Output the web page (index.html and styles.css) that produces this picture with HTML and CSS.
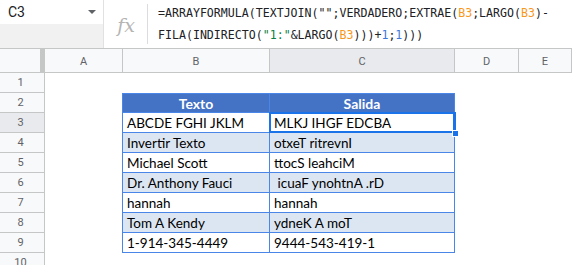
FILE: index.html
```html
<!DOCTYPE html>
<html>
<head>
<meta charset="utf-8">
<link rel="stylesheet" href="styles.css">
</head>
<body>
<div class="fbar">
  <div class="namebox">
    <div class="nb-top"><span class="nb-ref">C3</span><span class="nb-arrow"></span></div>
    <div class="nb-bottom"></div>
  </div>
  <div class="fx"><span>fx</span></div>
  <div class="formula">
    <div class="fline">=ARRAYFORMULA(TEXTJOIN("";VERDADERO;EXTRAE(<span class="ref">B3</span>;LARGO(<span class="ref">B3</span>)-</div>
    <div class="fline">FILA(INDIRECTO(<span class="str">"1:"</span>&amp;LARGO(<span class="ref">B3</span>)))+<span class="num">1</span>;<span class="num">1</span>)))</div>
  </div>
</div>
<div class="sheet">
  <div class="corner"></div>
  <div class="colh">A</div>
  <div class="colh">B</div>
  <div class="colh sel">C</div>
  <div class="colh">D</div>
  <div class="colh">E</div>

  <div class="rowh">1</div><div class="cell"></div><div class="cell"></div><div class="cell"></div><div class="cell"></div><div class="cell"></div>

  <div class="rowh">2</div><div class="cell"></div><div class="t th tl">Texto</div><div class="t th">Salida</div><div class="cell"></div><div class="cell"></div>

  <div class="rowh sel">3</div><div class="cell"></div><div class="t tl">ABCDE FGHI JKLM</div><div class="t active">MLKJ IHGF EDCBA<span class="handle"></span></div><div class="cell"></div><div class="cell"></div>

  <div class="rowh">4</div><div class="cell"></div><div class="t tl alt">Invertir Texto</div><div class="t alt">otxeT ritrevnI</div><div class="cell"></div><div class="cell"></div>

  <div class="rowh">5</div><div class="cell"></div><div class="t tl">Michael Scott</div><div class="t">ttocS leahciM</div><div class="cell"></div><div class="cell"></div>

  <div class="rowh">6</div><div class="cell"></div><div class="t tl alt">Dr. Anthony Fauci</div><div class="t alt">&nbsp;icuaF ynohtnA .rD</div><div class="cell"></div><div class="cell"></div>

  <div class="rowh">7</div><div class="cell"></div><div class="t tl">hannah</div><div class="t">hannah</div><div class="cell"></div><div class="cell"></div>

  <div class="rowh">8</div><div class="cell"></div><div class="t tl alt">Tom A Kendy</div><div class="t alt">ydneK A moT</div><div class="cell"></div><div class="cell"></div>

  <div class="rowh">9</div><div class="cell"></div><div class="t tl">1-914-345-4449</div><div class="t">9444-543-419-1</div><div class="cell"></div><div class="cell"></div>

  <div class="rowh">10</div><div class="cell"></div><div class="cell"></div><div class="cell"></div><div class="cell"></div><div class="cell"></div>
</div>
</body>
</html>
```
FILE: styles.css
```css
* { box-sizing: border-box; }
html, body { margin: 0; padding: 0; background: #fff; overflow: hidden; }
body { font-family: Roboto, "Liberation Sans", sans-serif; width: 572px; height: 265px; }

.fbar {
  display: flex;
  height: 49px;
  border-bottom: 1px solid #c4c7c5;
}
.namebox {
  width: 104px;
  display: flex;
  flex-direction: column;
  border-right: 1px solid #e1e1e1;
}
.nb-top {
  height: 24px;
  display: flex;
  align-items: center;
  justify-content: space-between;
  padding: 0 7px 0 8px;
  background: #fff;
}
.nb-ref { font-size: 14px; color: #202124; }
.nb-arrow {
  width: 0; height: 0;
  border-left: 4px solid transparent;
  border-right: 4px solid transparent;
  border-top: 4px solid #5f6368;
}
.nb-bottom { flex: 1; background: #f1f1f1; }

.fx {
  width: 44px;
  display: flex;
  align-items: center;
  justify-content: center;
  position: relative;
}
.fx::after {
  content: "";
  position: absolute;
  right: 0; top: 4px; bottom: 4px;
  width: 1px;
  background: #dadce0;
}
.fx span {
  font-family: "DejaVu Serif", "Liberation Serif", serif;
  font-style: italic;
  font-size: 19px;
  color: #b4b4b4;
  margin-top: 1px;
}
.formula {
  flex: 1;
  padding: 2px 0 0 10px;
  font-family: "DejaVu Sans Mono", "Liberation Mono", monospace;
  font-size: 11.6px;
  color: #202124;
  white-space: nowrap;
}
.fline { height: 22px; line-height: 22px; }
.ref { color: #f7981d; }
.num { color: #3c78d8; }
.str { color: #0b8043; }

.sheet {
  display: grid;
  width: 572px;
  grid-template-columns: 45px 78px 147px 185px 64px 1fr;
  grid-template-rows: 24px repeat(10, 20px);
}
.corner {
  background: #f8f9fa;
  border-right: 5px solid #c4c7c5;
  border-bottom: 1px solid #c4c7c5;
}
.colh {
  background: #f8f9fa;
  border-right: 1px solid #c4c7c5;
  border-bottom: 1px solid #c4c7c5;
  font-size: 11px;
  color: #5f6368;
  display: flex;
  align-items: center;
  justify-content: center;
  padding-top: 1px;
}
.colh:last-of-type { border-right: 0; }
.colh.sel { background: #e8eaed; }
.rowh {
  background: #f8f9fa;
  border-right: 1px solid #c4c7c5;
  border-bottom: 1px solid #c4c7c5;
  font-size: 11px;
  color: #5f6368;
  display: flex;
  align-items: center;
  justify-content: center;
  padding-right: 3px;
}
.rowh.sel { background: #e8eaed; }
.cell { background: #fff; }

.t {
  font-family: Lato, "Open Sans", sans-serif;
  font-size: 13.5px;
  color: #000;
  padding: 0 0 0 4px;
  display: flex;
  align-items: center;
  white-space: nowrap;
  border-right: 1px solid #4a86e8;
  border-bottom: 1px solid #4a86e8;
  position: relative;
}
.t.tl { box-shadow: -1px 0 0 #4a86e8; }
.t.alt { background: #dce6f2; }
.t.th {
  background: #4472c4;
  color: #fff;
  font-weight: bold;
  font-size: 14px;
  justify-content: center;
  padding: 0;
  border-top: 1px solid #4a86e8;
}
.t.active { box-shadow: 0 0 0 1px #1a73e8, inset 0 0 0 1px #1a73e8; border-color: #1a73e8; }
.handle {
  position: absolute;
  right: -5px;
  bottom: -5px;
  width: 7px;
  height: 7px;
  background: #1a73e8;
  border: 1px solid #fff;
  z-index: 2;
}
```
